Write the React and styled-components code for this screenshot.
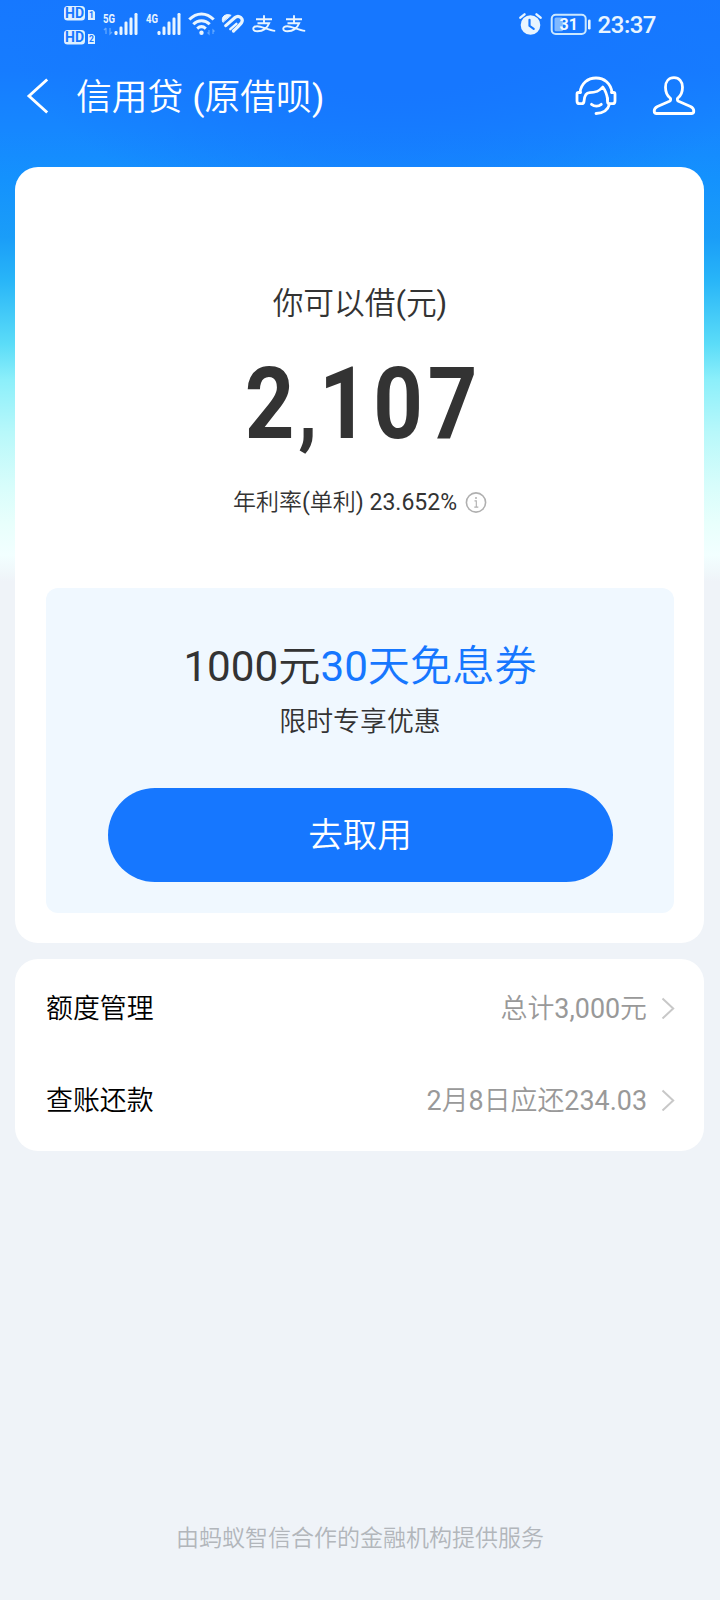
import React from "react";
import styled, { createGlobalStyle } from "styled-components";

const GlobalStyle = createGlobalStyle`
  * { box-sizing: border-box; }
  body {
    margin: 0;
    background: #eff3f8;
    font-family: Roboto, "Noto Sans CJK SC DemiLight", "Noto Sans CJK SC", sans-serif;
    color: #333;
  }
`;

const Page = styled.div`
  width: 720px;
  height: 1600px;
  display: flex;
  flex-direction: column;
  background:
    radial-gradient(ellipse 400px 230px at 55% 0, #1677ff 40%, rgba(22, 119, 255, 0) 100%),
    linear-gradient(
      180deg,
      #1678ff 0, #167cff 70px, #1687ff 130px, #1492fd 180px, #1a9df8 237px,
      #28b5f8 280px, #5bdcf8 344px, #8ceffa 380px, #b8f8fa 433px,
      #d8fdfb 487px, #e8fffc 523px, #f2ffff 555px, #eff3f8 582px
    );
  overflow: hidden;
`;

const StatusBar = styled.header`
  display: flex;
  justify-content: space-between;
  height: 48px;
  padding: 0 64px 0 62px;
  color: #e9f5ff;
`;

const StatusGroup = styled.div`
  display: flex;
  align-items: center;
`;

const Clock = styled.time`
  margin-left: 7px;
  padding-top: 1px;
  font-size: 24px;
  font-weight: 500;
  letter-spacing: -0.5px;
  line-height: 48px;
`;

const NavBar = styled.nav`
  display: flex;
  align-items: center;
  height: 98px;
  padding: 0 24px 2px 26px;
  color: #fff;
`;

const NavTitle = styled.h1`
  flex: 1;
  margin: 0 0 0 26px;
  padding-top: 4px;
  font-size: 35.8px;
  font-weight: 400;
  line-height: 48px;
`;

const NavActions = styled.div`
  display: flex;
  align-items: center;
  gap: 35px;
`;

const Card = styled.section`
  margin: ${(p) => p.$top}px 16px 0 15px;
  background: #fff;
  border-radius: 23px;
`;

const LoanCard = styled(Card)`
  height: 776px;
  padding: 113px 30px 0 31px;
  display: flex;
  flex-direction: column;
  align-items: center;
`;

const Label = styled.div`
  font-size: 30.7px;
  line-height: 48px;
`;

const Amount = styled.div`
  height: 100px;
  margin: 26px -8px 0 0;
  font-size: 99.5px;
  font-weight: 700;
  line-height: 100px;
  letter-spacing: 5.5px;
  white-space: nowrap;
  transform: scaleX(0.87);
`;

const Separator = styled.span`
  margin-left: -1px;
  font-size: 88px;
  letter-spacing: 2px;
`;

const Rate = styled.div`
  display: flex;
  align-items: center;
  gap: 8px;
  margin-top: 33px;
  font-size: 23px;
  line-height: 32px;
`;

const Offer = styled.div`
  display: flex;
  flex-direction: column;
  align-items: center;
  align-self: stretch;
  height: 325px;
  margin-top: 69px;
  padding-top: 49px;
  border-radius: 12px;
  background: #f0f8ff;
`;

const OfferTitle = styled.div`
  font-size: 42.2px;
  line-height: 60px;
`;

const Highlight = styled.span`
  color: #1677ff;
`;

const OfferNote = styled.div`
  margin-top: 5px;
  font-size: 26.9px;
  line-height: 40px;
`;

const PrimaryButton = styled.button`
  width: 505px;
  height: 94px;
  margin-top: 46px;
  padding: 0 0 6px;
  border: 0;
  border-radius: 47px;
  background: #1677ff;
  color: #fff;
  font-family: inherit;
  font-size: 34.6px;
`;

const ListCard = styled(Card)`
  height: 192px;
  padding: 3px 29px 5px 31px;
`;

const Row = styled.div`
  display: flex;
  align-items: center;
  height: 92px;
  font-size: 26.9px;
`;

const RowLabel = styled.span`
  flex: 1;
  padding-bottom: 3px;
  color: #000;
`;

const RowValue = styled.span`
  margin-right: 14px;
  padding-bottom: 3px;
  color: #999;
`;

const Footer = styled.footer`
  margin-top: auto;
  padding-bottom: 45px;
  text-align: center;
  font-size: 23px;
  line-height: 32px;
  color: #b2b6bb;
`;

const Icon = styled.svg`
  display: block;
  flex: none;
  margin-left: ${(p) => p.$gap || 0}px;
`;

const SimIcon = () => (
  <Icon width="34" height="48" viewBox="0 0 34 48">
    {[
      [6, "1"],
      [30, "2"],
    ].map(([y, n]) => (
      <g key={n} fill="#dff0ff">
        <rect x="2" y={y} width="21" height="14.5" rx="3.5" />
        <text x="12.5" y={y + 12.2} fill="#1677ff" fontSize="14" fontWeight="700" textAnchor="middle">HD</text>
        <path d={`M26 ${y + 4}h5l2 2v8h-7z`} />
        <text x="29.5" y={y + 12.3} fill="#1677ff" fontSize="8.5" fontWeight="700" textAnchor="middle">{n}</text>
      </g>
    ))}
  </Icon>
);

const SignalIcon = ({ label, data, gap }) => (
  <Icon $gap={gap} width="37" height="48" viewBox="0 0 37 48" fill="#e9f5ff">
    <text x="1" y="22.5" fontSize="12.5" fontWeight="700" textLength="12" lengthAdjust="spacingAndGlyphs">{label}</text>
    {data && (
      <path d="M4 34V28M2 30l2-2M8 28v6l2-2" fill="none" stroke="#62a8ff" strokeWidth="1.3" />
    )}
    <rect x="12.5" y="31" width="3" height="4" rx="1.2" />
    <rect x="17.5" y="26.5" width="3" height="8.5" rx="1.2" />
    <rect x="22.5" y="21.5" width="3" height="13.5" rx="1.2" />
    <rect x="27.5" y="17.5" width="3" height="17.5" rx="1.2" />
    <rect x="32.5" y="13" width="3" height="22" rx="1.2" />
  </Icon>
);

const WifiIcon = () => (
  <Icon $gap={6} width="30" height="48" viewBox="0 0 30 48" fill="none" stroke="#e9f5ff" strokeWidth="3">
    <path d="M1.3 19.5C8.5 12 18.5 12 25.7 19.5M5.3 24.3C10 19.6 17 19.6 21.7 24.3M9.2 28.6c2.7-2.4 5.9-2.4 8.6 0" />
    <circle cx="13.5" cy="32.8" r="2.2" fill="#e9f5ff" stroke="none" />
    <path d="M21 30v4l-1.5-1.5M25 34v-4l1.5 1.5" stroke="#62a8ff" strokeWidth="1.2" />
  </Icon>
);

const HealthIcon = () => (
  <Icon $gap={3} width="24" height="48" viewBox="0 0 24 48" fill="none" stroke="#e9f5ff" strokeLinecap="round">
    <path d="M1.8 22C-.5 17.200 4.200 13 9.800 15.200z" fill="#e9f5ff" strokeWidth="1" strokeLinejoin="round" />
    <path d="M4.800 25.600L14 17.600c4-3.200 9.200 1.200 6.300 5.400-1.500 2-5.200 5.400-7.800 8" strokeWidth="3.200" />
    <path d="M9.300 29.200L15.400 23.800" strokeWidth="2.400" />
  </Icon>
);

const PayIcon = ({ gap }) => (
  <Icon $gap={gap} width="24" height="48" viewBox="0 0 24 48" fill="none" stroke="#e9f5ff" strokeWidth="1.9">
    <path d="M4 19.2h16M12 15.2v7.8M5.5 23.2H17.2C15.3 28 10.8 31.3 5.5 31.3 0 31.3-.2 26.2 5.2 26.2 10 26.2 16 30.4 23.2 30.9" />
  </Icon>
);

const AlarmIcon = () => (
  <Icon width="24" height="48" viewBox="0 0 24 48" fill="none" stroke="#e9f5ff" strokeLinecap="round">
    <circle cx="11.5" cy="25" r="9.8" fill="#e9f5ff" stroke="none" />
    <path d="M1.4 17.7l4.1-3.4M21.600 17.7l-4.1-3.4" strokeWidth="2.4" />
    <path d="M10.500 19.8v6l4.2 3" stroke="#1677ff" strokeWidth="2.2" />
  </Icon>
);

const BatteryIcon = () => (
  <Icon $gap={7} width="41" height="48" viewBox="0 0 41 48">
    <rect x="1.7" y="14.7" width="34" height="19.3" rx="4" fill="none" stroke="#cbe8ff" strokeWidth="2" />
    <rect x="4.5" y="17.5" width="8.5" height="13.7" rx="1.5" fill="#80b9ff" />
    <rect x="38" y="19.5" width="2.6" height="10" rx="1.2" fill="#e9f5ff" />
    <text x="18.8" y="30" fill="#f1f9ff" fontSize="16" fontWeight="700" textAnchor="middle">31</text>
  </Icon>
);

const BackIcon = () => (
  <Icon width="24" height="38" viewBox="0 0 24 38" fill="none" stroke="#fff" strokeWidth="2.9">
    <path d="M21.2 2.5L3 19l18.2 16.5" />
  </Icon>
);

const ServiceIcon = () => (
  <Icon width="42" height="42" viewBox="0 0 42 42" fill="none" stroke="#fff" strokeWidth="2.8" strokeLinecap="round" strokeLinejoin="round">
    <path d="M5 17.5C6.2 8.3 12.8 3 21 3s14.8 5.3 16 14.5" />
    <path d="M5.5 17.5H3.5c-1 0-1.5.7-1.5 1.7v6.7c0 1.7 1.1 2.8 2.6 2.8h2.2c1.400 0 2-.7 2.200-2.200.4-5.500 2.100-8.800 5.500-8.800 6.500 0 10.500-2.200 13.300-5.700 2.400 3.200 4.200 7.600 4.800 12.500" />
    <path d="M36.5 17.5h2c1 0 1.5.7 1.5 1.7v6.7c0 1.7-1.1 2.8-2.6 2.8h-2.9c-1.5 0-2-1-2-2.5v-2.7" />
    <path d="M34.5 29c-1.5 6-6.4 9.3-13.5 9.5M16.5 29.3c3 2.3 7 2.3 9.8 0" />
  </Icon>
);

const ProfileIcon = () => (
  <Icon width="44" height="42" viewBox="0 0 44 42" fill="none" stroke="#fff" strokeWidth="2.8" strokeLinejoin="round">
    <path d="M22 2.7c-5.2 0-8.5 3.9-8.5 9.5 0 4.6 1.5 8.3 4.6 10.8.9 1 .8 2.5-.6 3.3L5.5 31.5c-2.4 1.2-3.3 2.7-3.3 4.5 0 1.6.9 2.5 2.5 2.5h34.6c1.6 0 2.5-.9 2.5-2.5 0-1.8-.9-3.3-3.3-4.5L26.5 26.3c-1.4-.8-1.5-2.3-.6-3.3 3.1-2.5 4.6-6.2 4.6-10.800 0-5.600-3.300-9.500-8.500-9.500z" />
  </Icon>
);

const InfoIcon = () => (
  <Icon width="22" height="22" viewBox="0 0 22 22" fill="none" stroke="#b0b0b0" strokeWidth="1.6">
    <circle cx="11" cy="10.5" r="9.6" />
    <path d="M9.5 8.900h1.8v6.2M9.3 15.100h4" strokeWidth="1.1" />
    <circle cx="11" cy="6" r="1" fill="#b0b0b0" stroke="none" />
  </Icon>
);

const ChevronIcon = () => (
  <Icon width="14" height="22" viewBox="0 0 14 22" fill="none" stroke="#c8c8c8" strokeWidth="2">
    <path d="M1.5 1.5l10.7 10L1.5 21.5" />
  </Icon>
);

const rows = [
  { label: "额度管理", value: "总计3,000元" },
  { label: "查账还款", value: "2月8日应还234.03" },
];

export default function App() {
  return (
    <>
      <GlobalStyle />
      <Page>
        <StatusBar>
          <StatusGroup>
            <SimIcon />
            <SignalIcon label="5G" data gap={6} />
            <SignalIcon label="4G" gap={6} />
            <WifiIcon />
            <HealthIcon />
            <PayIcon gap={7} />
            <PayIcon gap={6} />
          </StatusGroup>
          <StatusGroup>
            <AlarmIcon />
            <BatteryIcon />
            <Clock>23:37</Clock>
          </StatusGroup>
        </StatusBar>
        <NavBar>
          <BackIcon />
          <NavTitle>信用贷 (原借呗)</NavTitle>
          <NavActions>
            <ServiceIcon />
            <ProfileIcon />
          </NavActions>
        </NavBar>
        <LoanCard $top={21}>
          <Label>你可以借(元)</Label>
          <Amount>
            2<Separator>,</Separator>107
          </Amount>
          <Rate>
            年利率(单利) 23.652%
            <InfoIcon />
          </Rate>
          <Offer>
            <OfferTitle>
              1000元<Highlight>30天免息券</Highlight>
            </OfferTitle>
            <OfferNote>限时专享优惠</OfferNote>
            <PrimaryButton>去取用</PrimaryButton>
          </Offer>
        </LoanCard>
        <ListCard $top={16}>
          {rows.map((row) => (
            <Row key={row.label}>
              <RowLabel>{row.label}</RowLabel>
              <RowValue>{row.value}</RowValue>
              <ChevronIcon />
            </Row>
          ))}
        </ListCard>
        <Footer>由蚂蚁智信合作的金融机构提供服务</Footer>
      </Page>
    </>
  );
}
